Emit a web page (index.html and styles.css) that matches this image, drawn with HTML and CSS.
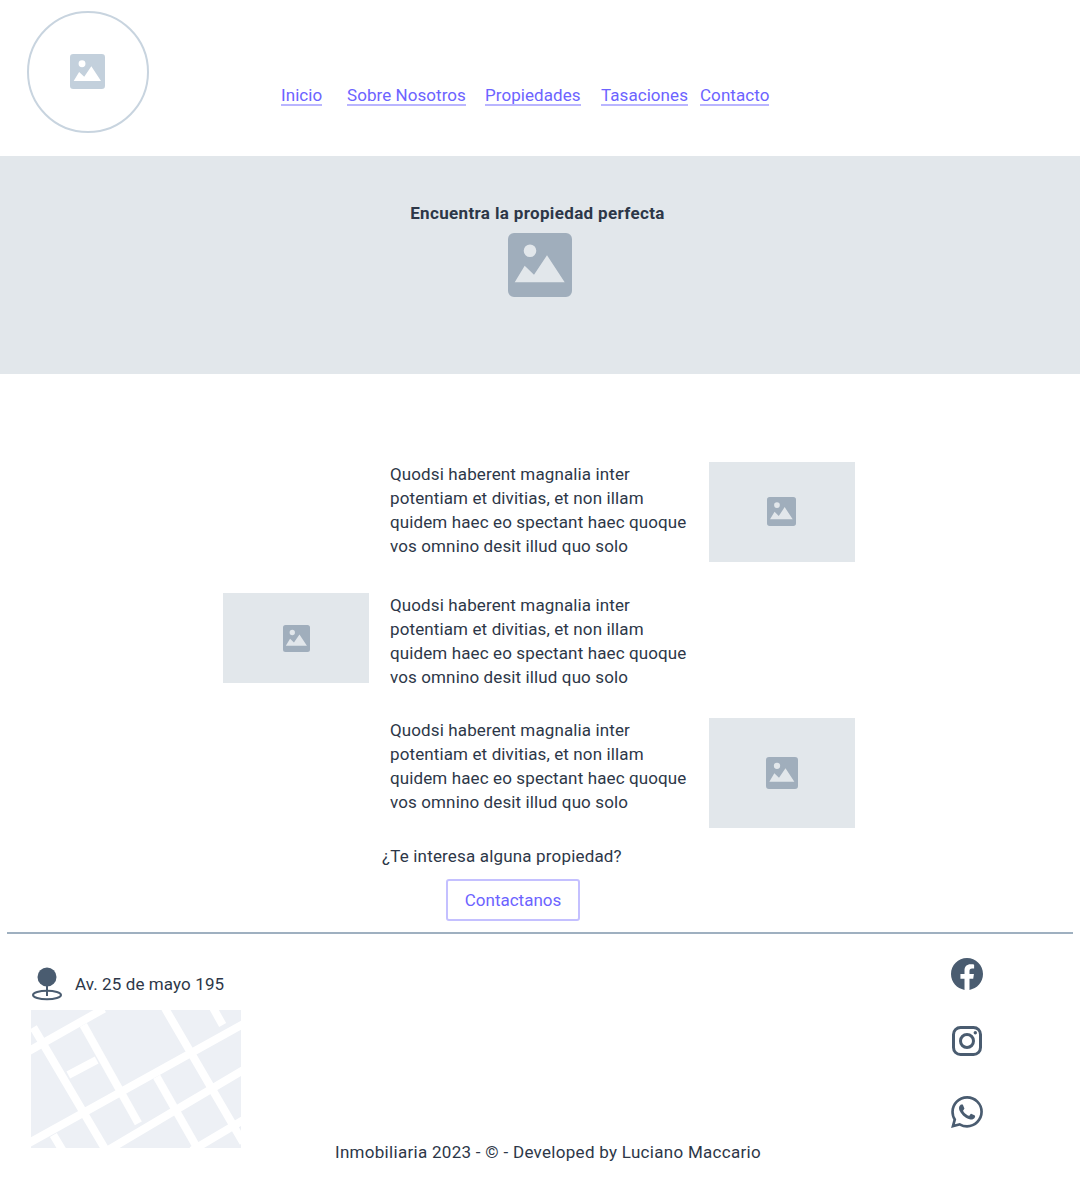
FILE: index.html
```html
<!DOCTYPE html>
<html lang="es">
  <head>
    <title>Inmobiliaria</title>
    <meta charset="utf-8">
    <meta name="viewport" content="width=device-width, initial-scale=1">
    <link rel="stylesheet" href="styles.css">
  </head>
  <body>
    <svg class="defs" width="0" height="0">
      <symbol id="placeholder" viewBox="0 0 64 64">
        <path fill="currentColor" fill-rule="evenodd" d="M6 0H58A6 6 0 0 1 64 6V58A6 6 0 0 1 58 64H6A6 6 0 0 1 0 58V6A6 6 0 0 1 6 0ZM22 11.4A6.3 6.3 0 1 0 22 24A6.3 6.3 0 1 0 22 11.4ZM6.7 49.3H56.7L39 22.3L26 41.7L16.7 32.7Z"/>
      </symbol>
    </svg>

    <header class="header">
      <div class="logo">
        <svg class="logo-icon"><use href="#placeholder"/></svg>
      </div>
      <nav class="nav">
        <a href="#">Inicio</a>
        <a href="#">Sobre Nosotros</a>
        <a href="#">Propiedades</a>
        <a href="#">Tasaciones</a>
        <a href="#">Contacto</a>
      </nav>
    </header>

    <section class="hero">
      <h1>Encuentra la propiedad perfecta</h1>
      <svg class="hero-icon"><use href="#placeholder"/></svg>
    </section>

    <section class="features">
      <div class="feature">
        <p class="feature-text">Quodsi haberent magnalia inter potentiam et divitias, et non illam quidem haec eo spectant haec quoque vos omnino desit illud quo solo</p>
        <div class="thumb thumb-right thumb-100">
          <svg class="thumb-icon thumb-icon-first"><use href="#placeholder"/></svg>
        </div>
      </div>
      <div class="feature feature-second">
        <div class="thumb thumb-left thumb-90">
          <svg class="thumb-icon thumb-icon-small"><use href="#placeholder"/></svg>
        </div>
        <p class="feature-text">Quodsi haberent magnalia inter potentiam et divitias, et non illam quidem haec eo spectant haec quoque vos omnino desit illud quo solo</p>
      </div>
      <div class="feature feature-third">
        <p class="feature-text">Quodsi haberent magnalia inter potentiam et divitias, et non illam quidem haec eo spectant haec quoque vos omnino desit illud quo solo</p>
        <div class="thumb thumb-right thumb-110">
          <svg class="thumb-icon thumb-icon-big"><use href="#placeholder"/></svg>
        </div>
      </div>
    </section>

    <section class="cta">
      <p>¿Te interesa alguna propiedad?</p>
      <a class="button" href="#">Contactanos</a>
    </section>

    <hr class="rule">

    <footer class="footer">
      <div class="location">
        <div class="address">
          <svg class="pin" viewBox="0 0 32 36">
            <circle cx="16" cy="11" r="9.5" fill="#4a5c70"/>
            <path d="M16 18V30" fill="none" stroke="#4a5c70" stroke-width="2"/>
            <ellipse cx="16" cy="29" rx="14" ry="4.3" fill="none" stroke="#4a5c70" stroke-width="2"/>
          </svg>
          <span>Av. 25 de mayo 195</span>
        </div>
        <svg class="map" viewBox="93 180 630 414">
          <rect x="93" y="180" width="630" height="414" fill="#edf0f5"/>
          <g fill="none" stroke="#fff" stroke-width="24">
            <path d="M100 232L320 605"/>
            <path d="M250 225L415 520"/>
            <path d="M160 555L190 605"/>
            <path d="M495 175L730 578"/>
            <path d="M640 175L668 225"/>
            <path d="M470 380L595 600"/>
            <path d="M85 304L312 176"/>
            <path d="M205 375L290 330"/>
            <path d="M85 580L730 222"/>
            <path d="M325 600L730 360"/>
            <path d="M575 602L730 510"/>
          </g>
        </svg>
      </div>
      <p class="copyright">Inmobiliaria 2023 - © - Developed by Luciano Maccario</p>
      <div class="social">
        <a href="#" class="social-facebook">
          <svg viewBox="0 0 24 24"><path fill="#4a5c70" d="M24 12.073c0-6.627-5.373-12-12-12s-12 5.373-12 12c0 5.99 4.388 10.954 10.125 11.854v-8.385H7.078v-3.47h3.047V9.43c0-3.007 1.792-4.669 4.533-4.669 1.312 0 2.686.235 2.686.235v2.953H15.83c-1.491 0-1.956.925-1.956 1.874v2.25h3.328l-.532 3.47h-2.796v8.385C19.612 23.027 24 18.062 24 12.073z"/></svg>
        </a>
        <a href="#" class="social-instagram">
          <svg viewBox="0 0 32 32" fill="none" stroke="#4a5c70" stroke-width="3">
            <rect x="2.5" y="2.5" width="27" height="27" rx="7"/>
            <circle cx="16" cy="16" r="6.5"/>
            <circle cx="24.3" cy="7.7" r="1.7" fill="#4a5c70" stroke="none"/>
          </svg>
        </a>
        <a href="#" class="social-whatsapp">
          <svg viewBox="0 0 24 24"><path fill="#4a5c70" d="M17.472 14.382c-.297-.149-1.758-.867-2.03-.967-.273-.099-.471-.148-.67.15-.197.297-.767.966-.94 1.164-.173.199-.347.223-.644.075-.297-.15-1.255-.463-2.39-1.475-.883-.788-1.48-1.761-1.653-2.059-.173-.297-.018-.458.13-.606.134-.133.298-.347.446-.52.149-.174.198-.298.298-.497.099-.198.05-.371-.025-.52-.075-.149-.669-1.612-.916-2.207-.242-.579-.487-.5-.669-.51-.173-.008-.371-.01-.57-.01-.198 0-.52.074-.792.372-.272.297-1.04 1.016-1.04 2.479 0 1.462 1.065 2.875 1.213 3.074.149.198 2.096 3.2 5.077 4.487.709.306 1.262.489 1.694.625.712.227 1.36.195 1.871.118.571-.085 1.758-.719 2.006-1.413.248-.694.248-1.289.173-1.413-.074-.124-.272-.198-.57-.347m-5.421 7.403h-.004a9.87 9.87 0 01-5.031-1.378l-.361-.214-3.741.982.998-3.648-.235-.374a9.86 9.86 0 01-1.51-5.26c.001-5.45 4.436-9.884 9.888-9.884 2.64 0 5.122 1.03 6.988 2.898a9.825 9.825 0 012.893 6.994c-.003 5.45-4.437 9.884-9.885 9.884m8.413-18.297A11.815 11.815 0 0012.05 0C5.495 0 .16 5.335.157 11.892c0 2.096.547 4.142 1.588 5.945L.057 24l6.305-1.654a11.882 11.882 0 005.683 1.448h.005c6.554 0 11.89-5.335 11.893-11.893a11.821 11.821 0 00-3.48-8.413z"/></svg>
        </a>
      </div>
    </footer>
  </body>
</html>
```

FILE: styles.css
```css
body {
  margin: 0;
  color: #2d3748;
  background: #fff;
  font-family: "Roboto", "Liberation Sans", sans-serif;
  font-size: 17px;
  line-height: 24px;
}
p {
  margin: 0;
}
a {
  color: #6c63ff;
  text-decoration: none;
}
.defs {
  display: block;
  height: 0;
}

/* header */
.header {
  display: flex;
  height: 156px;
  box-sizing: border-box;
  padding: 11px 0 0 27px;
}
.logo {
  display: flex;
  justify-content: center;
  align-items: center;
  width: 118px;
  height: 118px;
  border: 2px solid #c8d4df;
  border-radius: 50%;
}
.logo-icon {
  width: 35px;
  height: 35px;
  margin: -1px 1px 0 0;
  color: #c3d0dc;
}
.nav {
  display: grid;
  grid-template-columns: 66px 138px 116px 99px auto;
  align-self: flex-start;
  margin: 74px 0 0 132px;
  letter-spacing: 0.06px;
}
.nav a {
  justify-self: start;
  padding-top: 1px;
  border-bottom: 2px solid #b9b5ff;
  line-height: 18px;
}

/* hero */
.hero {
  display: flex;
  flex-direction: column;
  align-items: center;
  height: 218px;
  box-sizing: border-box;
  padding-top: 45px;
  background: #e2e7eb;
}
.hero h1 {
  margin: 0 0 8px -5px;
  font-size: 17px;
  line-height: 24px;
  font-weight: 700;
  letter-spacing: 0.35px;
}
.hero-icon {
  width: 64px;
  height: 64px;
  color: #a0aebc;
}

/* features */
.features {
  width: 632px;
  margin: 88px 0 0 223px;
}
.feature {
  display: grid;
  grid-template-columns: 146px 298px 146px;
  column-gap: 21px;
  align-items: start;
}
.feature-second {
  margin-top: 31px;
}
.feature-third {
  margin-top: 29px;
}
.feature-text {
  grid-column: 2;
  grid-row: 1;
  margin-right: -6px;
  letter-spacing: 0.12px;
}
.thumb {
  display: flex;
  justify-content: center;
  align-items: center;
  grid-row: 1;
  background: #e2e7eb;
  color: #a0aebc;
}
.thumb-left {
  grid-column: 1;
}
.thumb-right {
  grid-column: 3;
}
.thumb-90 {
  height: 90px;
}
.thumb-100 {
  height: 100px;
}
.thumb-110 {
  height: 110px;
}
.thumb-icon {
  width: 29px;
  height: 29px;
}
.thumb-icon-first {
  margin: -2px 2px 0 0;
}
.thumb-icon-small {
  width: 27px;
  height: 27px;
}
.thumb-icon-big {
  width: 32px;
  height: 32px;
}

/* call to action */
.cta {
  display: flex;
  flex-direction: column;
  align-items: flex-start;
  margin: 16px 0 0 382px;
  letter-spacing: 0.17px;
}
.button {
  box-sizing: border-box;
  width: 134px;
  height: 42px;
  margin: 11px 0 0 64px;
  border: 2px solid #c4c0ff;
  border-radius: 3px;
  text-align: center;
  line-height: 39px;
  letter-spacing: 0;
}
.rule {
  height: 2px;
  margin: 11px 7px 0;
  border: 0;
  background: #9fb0c0;
}

/* footer */
.footer {
  display: grid;
  grid-template-columns: 210px 1fr 32px;
  height: 245px;
  box-sizing: border-box;
  padding: 24px 97px 15px 31px;
}
.location {
  padding-top: 8px;
}
.address {
  display: flex;
  align-items: center;
  gap: 12px;
  height: 36px;
  letter-spacing: 0.1px;
}
.pin {
  width: 32px;
  height: 36px;
  flex-shrink: 0;
}
.map {
  display: block;
  width: 210px;
  height: 138px;
  margin-top: 8px;
}
.copyright {
  align-self: end;
  margin-left: 94px;
  letter-spacing: 0.29px;
}
.social {
  display: flex;
  flex-direction: column;
  gap: 35px;
}
.social a {
  display: block;
  width: 32px;
  height: 32px;
}
.social svg {
  display: block;
  width: 32px;
  height: 32px;
}
.social-whatsapp {
  margin-top: 4px;
}
```
